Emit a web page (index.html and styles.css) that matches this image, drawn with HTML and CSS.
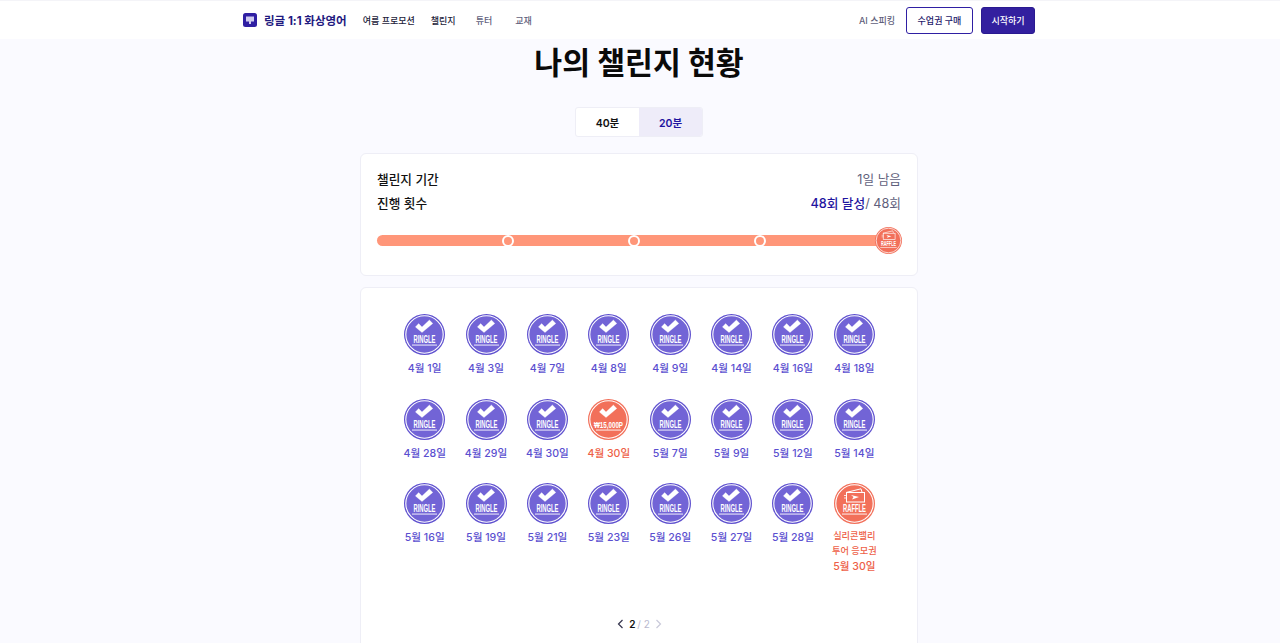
FILE: index.html
```html
<!DOCTYPE html>
<html lang="ko">
<head>
<meta charset="utf-8">
<title>나의 챌린지 현황</title>
<link rel="stylesheet" href="styles.css">
</head>
<body>
<svg class="defs" width="0" height="0" aria-hidden="true">
  <defs>
    <symbol id="check" viewBox="0 0 41 41">
      <path d="M14.6 9.6 L18 13 L25.4 6 L28.8 9.4 L18 18.6 L11.4 13 Z" fill="#fff" stroke="#fff" stroke-width=".3" stroke-linejoin="round"/>
    </symbol>
    <symbol id="ringle" viewBox="0 0 41 41">
      <circle cx="20.5" cy="20.5" r="20.5" fill="#5f51cf"/>
      <circle cx="20.5" cy="20.5" r="18.7" fill="#7264d6" stroke="#fff" stroke-width="1.1"/>
      <use href="#check" width="41" height="41"/>
      <text x="20.5" y="29.3" class="badge-text" text-anchor="middle" textLength="22" lengthAdjust="spacingAndGlyphs">RINGLE</text>
      <rect x="8" y="30.6" width="25" height=".9" fill="#fff"/>
    </symbol>
    <symbol id="raffle" viewBox="0 0 41 41">
      <circle cx="20.5" cy="20.5" r="20.5" fill="#f2705a"/>
      <circle cx="20.5" cy="20.5" r="18.7" fill="#f2705a" stroke="#fff" stroke-width="1.1"/>
      <path d="M12 9.5 L27 5.8 L28 9" fill="none" stroke="#fff" stroke-width="1"/>
      <rect x="12.5" y="9.5" width="18" height="9.5" fill="#f2705a" stroke="#fff" stroke-width="1"/>
      <path d="M17 12 L25 14 L18 16.5 L19.5 14 Z" fill="#fff"/>
      <path d="M10 12.5 H13 M10 15 H13" stroke="#fff" stroke-width=".8"/>
      <text x="20.5" y="28.9" class="badge-text" text-anchor="middle" textLength="23" lengthAdjust="spacingAndGlyphs">RAFFLE</text>
      <rect x="8" y="30.6" width="25" height=".9" fill="#fff"/>
    </symbol>
  </defs>
</svg>

<header class="topbar">
  <div class="topbar-inner">
    <a class="brand">
      <svg class="brand-icon" viewBox="0 0 14 14"><rect width="14" height="14" rx="2.5" fill="#2f1fa3"/><path d="M3 3.5h8v5H8v2.5H6V8.5H3z" fill="#cfcbf0"/></svg>
      <span>링글 1:1 화상영어</span>
    </a>
    <nav class="nav">
      <a class="nav-item strong nav-promo">여름 프로모션</a>
      <a class="nav-item strong nav-challenge">챌린지</a>
      <a class="nav-item nav-tutor">튜터</a>
      <a class="nav-item">교재</a>
    </nav>
    <div class="actions">
      <a class="nav-item ai">AI 스피킹</a>
      <a class="btn btn-outline">수업권 구매</a>
      <a class="btn btn-solid">시작하기</a>
    </div>
  </div>
</header>

<main class="page">
  <h1 class="title">나의 챌린지 현황</h1>

  <div class="tabs">
    <div class="tab">40분</div>
    <div class="tab tab-active">20분</div>
  </div>

  <section class="card summary">
    <div class="line">
      <span class="line-label">챌린지 기간</span>
      <span class="line-value">1일 남음</span>
    </div>
    <div class="line">
      <span class="line-label">진행 횟수</span>
      <span class="line-value"><b class="done">48회 달성</b>/ 48회</span>
    </div>
    <div class="progress">
      <span class="knob knob-1"></span>
      <span class="knob knob-2"></span>
      <span class="knob knob-3"></span>
      <svg class="progress-end"><use href="#raffle"/></svg>
    </div>
  </section>

  <section class="card stamps">
    <div class="grid">
      <div class="stamp"><svg class="badge"><use href="#ringle"/></svg><span>4월 1일</span></div>
      <div class="stamp"><svg class="badge"><use href="#ringle"/></svg><span>4월 3일</span></div>
      <div class="stamp"><svg class="badge"><use href="#ringle"/></svg><span>4월 7일</span></div>
      <div class="stamp"><svg class="badge"><use href="#ringle"/></svg><span>4월 8일</span></div>
      <div class="stamp"><svg class="badge"><use href="#ringle"/></svg><span>4월 9일</span></div>
      <div class="stamp"><svg class="badge"><use href="#ringle"/></svg><span>4월 14일</span></div>
      <div class="stamp"><svg class="badge"><use href="#ringle"/></svg><span>4월 16일</span></div>
      <div class="stamp"><svg class="badge"><use href="#ringle"/></svg><span>4월 18일</span></div>

      <div class="stamp"><svg class="badge"><use href="#ringle"/></svg><span>4월 28일</span></div>
      <div class="stamp"><svg class="badge"><use href="#ringle"/></svg><span>4월 29일</span></div>
      <div class="stamp"><svg class="badge"><use href="#ringle"/></svg><span>4월 30일</span></div>
      <div class="stamp stamp-red">
        <svg class="badge" viewBox="0 0 41 41">
          <circle cx="20.5" cy="20.5" r="20.5" fill="#f2705a"/>
          <circle cx="20.5" cy="20.5" r="18.7" fill="#f2705a" stroke="#fff" stroke-width="1.1"/>
          <use href="#check" width="41" height="41"/>
          <text x="20.5" y="28.8" class="badge-text small" text-anchor="middle" textLength="29" lengthAdjust="spacingAndGlyphs">₩15,000P</text>
          <rect x="8" y="30.6" width="25" height=".9" fill="#fff"/>
        </svg>
        <span>4월 30일</span>
      </div>
      <div class="stamp"><svg class="badge"><use href="#ringle"/></svg><span>5월 7일</span></div>
      <div class="stamp"><svg class="badge"><use href="#ringle"/></svg><span>5월 9일</span></div>
      <div class="stamp"><svg class="badge"><use href="#ringle"/></svg><span>5월 12일</span></div>
      <div class="stamp"><svg class="badge"><use href="#ringle"/></svg><span>5월 14일</span></div>

      <div class="stamp"><svg class="badge"><use href="#ringle"/></svg><span>5월 16일</span></div>
      <div class="stamp"><svg class="badge"><use href="#ringle"/></svg><span>5월 19일</span></div>
      <div class="stamp"><svg class="badge"><use href="#ringle"/></svg><span>5월 21일</span></div>
      <div class="stamp"><svg class="badge"><use href="#ringle"/></svg><span>5월 23일</span></div>
      <div class="stamp"><svg class="badge"><use href="#ringle"/></svg><span>5월 26일</span></div>
      <div class="stamp"><svg class="badge"><use href="#ringle"/></svg><span>5월 27일</span></div>
      <div class="stamp"><svg class="badge"><use href="#ringle"/></svg><span>5월 28일</span></div>
      <div class="stamp stamp-red">
        <svg class="badge"><use href="#raffle"/></svg>
        <em class="prize">실리콘밸리<br>투어 응모권</em>
        <span>5월 30일</span>
      </div>
    </div>

    <div class="pager">
      <svg class="chev" viewBox="0 0 8 10"><path d="M5.5 1 L1.5 5 L5.5 9" fill="none" stroke="#33334d" stroke-width="1.2"/></svg>
      <b>2</b><i>/ 2</i>
      <svg class="chev" viewBox="0 0 8 10"><path d="M2.5 1 L6.5 5 L2.5 9" fill="none" stroke="#c9c9da" stroke-width="1.2"/></svg>
    </div>
  </section>
</main>
</body>
</html>
```

FILE: styles.css
```css
* { box-sizing: border-box; }
html, body { height: 643px; overflow: hidden; }
body {
  margin: 0;
  background: #fafaff;
  color: #000;
  font-family: Inter, "Noto Sans CJK KR", sans-serif;
}
.defs { display: block; height: 0; }

.topbar { height: 39px; background: #fff; border-top: 1px solid #f4f4f8; }
.topbar-inner {
  width: 792px;
  height: 38px;
  margin-left: 243px;
  display: flex;
  align-items: center;
}
.brand {
  display: flex;
  align-items: center;
  gap: 7px;
  font-size: 11.5px;
  font-weight: 700;
  color: #1f1a80;
}
.brand-icon { width: 14px; height: 14px; }
.nav { display: flex; align-items: center; margin-left: 16px; }
.nav-item { font-size: 9px; font-weight: 500; color: #5f5f7c; }
.nav-item.strong { color: #22223a; }
.nav-promo { margin-right: 16px; }
.nav-challenge { margin-right: 20px; }
.nav-tutor { margin-right: 23px; }
.actions { margin-left: auto; display: flex; align-items: center; }
.ai { margin-right: 11px; }
.btn {
  height: 27px;
  display: flex;
  align-items: center;
  justify-content: center;
  font-size: 9px;
  font-weight: 500;
  border-radius: 3px;
}
.btn-outline { width: 67px; border: 1px solid #2f1fa3; color: #1f1a6a; background: #fff; margin-right: 8px; }
.btn-solid { width: 54px; background: #33209f; color: #fff; border: 1px solid #2a1a90; }

.page { width: 558px; margin-left: 360px; }
.title {
  margin: 0;
  height: 68px;
  line-height: 48px;
  text-align: center;
  font-size: 30.3px;
  font-weight: 700;
  color: #0a0a0a;
}
.tabs {
  width: 128px;
  height: 30px;
  margin: 0 auto 16px 215px;
  display: flex;
  border: 1px solid #eeeef6;
  border-radius: 3px;
  overflow: hidden;
  background: #fff;
}
.tab {
  flex: 1;
  display: flex;
  align-items: center;
  justify-content: center;
  font-size: 10.5px;
  font-weight: 600;
  color: #111;
}
.tab-active { background: #eeecf9; color: #1f14a0; }

.card {
  background: #fff;
  border: 1px solid #eeeef6;
  border-radius: 6px;
  margin-bottom: 11px;
}
.summary { height: 123px; padding: 12px 16px 0; }
.line {
  height: 24px;
  display: flex;
  align-items: center;
  justify-content: space-between;
  font-size: 12.7px;
}
.line-label { font-weight: 500; color: #111; }
.line-value { color: #5f5f7c; }
.done { font-weight: 500; color: #1f14a0; }

.progress {
  position: relative;
  height: 11px;
  margin: 21px 0 0;
  width: 514px;
  background: #ff9679;
  border-radius: 6px;
}
.knob {
  position: absolute;
  top: -0.5px;
  width: 12px;
  height: 12px;
  border-radius: 50%;
  border: 2px solid #fff;
  background: #ff9679;
}
.knob-1 { left: 125px; }
.knob-2 { left: 251px; }
.knob-3 { left: 376.5px; }
.progress-end {
  position: absolute;
  right: -11px;
  top: -8px;
  width: 27px;
  height: 27px;
}

.stamps { height: 420px; padding: 26px 32px 0 33px; }
.grid {
  display: grid;
  grid-template-columns: repeat(8, 1fr);
  align-content: start;
  row-gap: 19.5px;
  height: 290px;
}
.stamp {
  display: flex;
  flex-direction: column;
  align-items: center;
  font-size: 10.6px;
  line-height: 20px;
  font-weight: 500;
  color: #5b4fd0;
}
.badge { width: 41px; height: 41px; display: block; margin-bottom: 4px; }
.badge-text {
  font-family: "Liberation Sans Narrow", "Liberation Sans", sans-serif;
  font-size: 10.5px;
  font-weight: 700;
  fill: #fff;
}
.badge-text.small { font-size: 8.5px; }
.stamp-red { color: #ee5f48; }
.prize { font-style: normal; font-size: 9.2px; line-height: 15px; text-align: center; margin-bottom: -1px; }

.pager {
  display: flex;
  align-items: center;
  justify-content: center;
  gap: 4px;
  margin-top: 13px;
  font-size: 10px;
  line-height: 14px;
}
.pager b { font-weight: 600; color: #111; }
.pager i { font-style: normal; color: #b9b9cf; margin-left: -2px; }
.chev { width: 8px; height: 10px; }
```
